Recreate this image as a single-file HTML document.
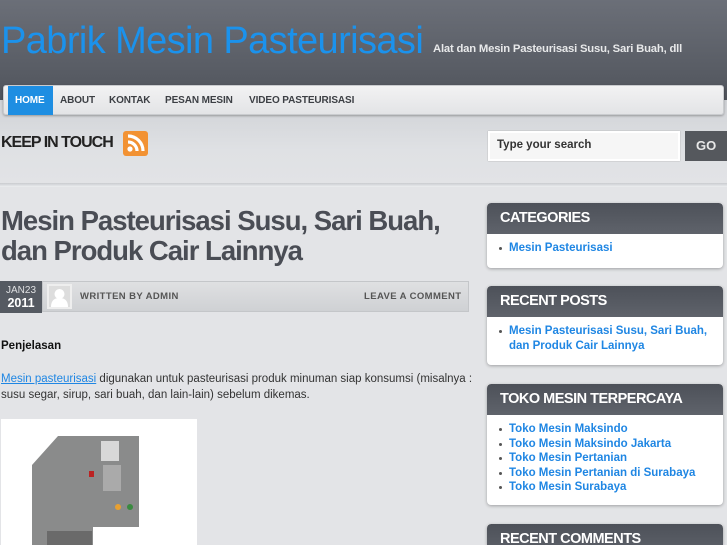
<!DOCTYPE html>
<html><head><meta charset="utf-8"><style>
*{margin:0;padding:0;box-sizing:border-box}
html,body{width:727px;height:545px;overflow:hidden}
body{background:#e3e4e7;font-family:"Liberation Sans",sans-serif;position:relative}
.hdr{position:absolute;left:0;top:0;width:727px;height:100px;background:linear-gradient(#6b6f78,#565a62 80%,#4e525a)}
.title{position:absolute;left:1px;top:20px;font-size:38px;color:#1b92ec;letter-spacing:-0.6px}
.tag{position:absolute;left:433px;top:43px;font-size:11.3px;font-weight:bold;color:#e8e9ea;letter-spacing:-0.2px}
.band{position:absolute;left:0;top:100px;width:727px;height:84px;background:linear-gradient(#d0d2d6,#dfe1e4 60%,#e2e3e6)}
.nav{position:absolute;left:3px;top:85px;width:721px;height:30px;background:linear-gradient(#f2f2f3,#e3e4e6);border:1px solid #c9cbce;border-radius:3px;box-shadow:0 1px 2px rgba(0,0,0,.3)}
.nav span{position:absolute;top:0;height:28px;line-height:29px;font-size:10px;font-weight:bold;color:#3c3f44;letter-spacing:-0.1px}
.sep{position:absolute;left:0;top:183px;width:727px;height:4px;background:linear-gradient(#c9cbcf,#eceef0)}
.side{position:absolute;left:487px;width:236px;background:#fff;border-radius:4px;box-shadow:0 1px 3px rgba(0,0,0,.3);overflow:hidden}
.side h3{background:linear-gradient(#4d5159,#5f636b);color:#fff;font-size:14.5px;height:31px;line-height:31px;padding-left:13px;border-radius:4px 4px 0 0;letter-spacing:-0.5px}
.side ul{list-style:none;padding:7px 0 0 11px}
.side li{font-size:11.5px;font-weight:bold;color:#1f86e3;line-height:14.5px;padding-left:11px;position:relative}
.side li:before{content:"";position:absolute;left:1px;top:6px;width:3px;height:3px;background:#555;border-radius:50%}
</style></head><body>
<div class="hdr"></div>
<div class="title">Pabrik Mesin Pasteurisasi</div>
<div class="tag">Alat dan Mesin Pasteurisasi Susu, Sari Buah, dll</div>
<div class="band"></div>
<div class="nav">
<span style="left:4px;width:45px;background:#1e8ee2;color:#fff;padding-left:7px;height:29px;top:0">HOME</span>
<span style="left:56px">ABOUT</span><span style="left:105px">KONTAK</span><span style="left:161px">PESAN MESIN</span><span style="left:245px">VIDEO PASTEURISASI</span>
</div>
<div style="position:absolute;left:1px;top:134px;font-size:16px;font-weight:bold;color:#222;letter-spacing:-1px">KEEP IN TOUCH</div>
<svg style="position:absolute;left:123px;top:131px" width="25" height="25"><rect width="25" height="25" rx="3" fill="#f29233"/><circle cx="7" cy="18" r="2.6" fill="#fff"/><path d="M5 11a9 9 0 0 1 9 9M5 5a15 15 0 0 1 15 15" stroke="#fff" stroke-width="3.2" fill="none"/></svg>
<div style="position:absolute;left:488px;top:131px;width:192px;height:30px;background:#f6f6f6;border:2px solid #fff;box-shadow:0 0 1px #999;font-size:11.5px;font-weight:bold;color:#333;padding:6px 7px">Type your search</div>
<div style="position:absolute;left:685px;top:131px;width:42px;height:30px;background:#55585d;color:#e8e8e8;font-size:13px;font-weight:bold;line-height:30px;padding-left:11px">GO</div>
<div class="sep"></div>
<div style="position:absolute;left:1px;top:206px;font-size:27.5px;font-weight:bold;color:#4a4d55;line-height:30px;letter-spacing:-1px">Mesin Pasteurisasi Susu, Sari Buah,<br>dan Produk Cair Lainnya</div>
<div style="position:absolute;left:42px;top:281px;width:427px;height:31px;background:linear-gradient(#dfe0e2,#cfd1d4);border:1px solid #c4c6c9"></div>
<div style="position:absolute;left:0;top:281px;width:42px;height:32px;background:#555a62;color:#fff;text-align:center"><div style="font-size:10px;margin-top:4px;color:#dfe0e2">JAN23</div><div style="font-size:12.5px;font-weight:bold">2011</div></div>
<div style="position:absolute;left:47px;top:284px;width:25px;height:25px;background:#ddd;border:2px solid #eee"><svg width="21" height="21"><circle cx="10.5" cy="8" r="5" fill="#fff"/><path d="M2 21c0-7 4-9 8.5-9s8.5 2 8.5 9z" fill="#fff"/></svg></div>
<div style="position:absolute;left:80px;top:291px;font-size:9.5px;font-weight:bold;color:#555;letter-spacing:.4px">WRITTEN BY ADMIN</div>
<div style="position:absolute;left:364px;top:291px;font-size:9.5px;font-weight:bold;color:#555;letter-spacing:.4px">LEAVE A COMMENT</div>
<div style="position:absolute;left:1px;top:340px;font-size:11.5px;font-weight:bold;color:#111">Penjelasan</div>
<div style="position:absolute;left:1px;top:371px;width:478px;font-size:11.5px;color:#333;line-height:16px"><span style="color:#1f86e3;text-decoration:underline">Mesin pasteurisasi</span> digunakan untuk pasteurisasi produk minuman siap konsumsi (misalnya : susu segar, sirup, sari buah, dan lain-lain) sebelum dikemas.</div>
<div style="position:absolute;left:1px;top:419px;width:196px;height:126px;background:#fff;overflow:hidden">
<svg width="196" height="130"><path d="M31 46 L31 130 L92 130 L92 108 L138 108 L138 17 L57 17 Z" fill="#8a8b8b"/><rect x="100" y="22" width="18" height="20" fill="#d8d8d8"/><rect x="102" y="46" width="18" height="26" fill="#aaa"/><rect x="88" y="52" width="5" height="6" fill="#b22"/><circle cx="117" cy="88" r="3" fill="#e8a030"/><circle cx="129" cy="88" r="3" fill="#3a8a40"/><rect x="46" y="112" width="45" height="18" fill="#6a6a6a"/></svg></div>
<div class="side" style="top:203px;height:65px"><h3>CATEGORIES</h3><ul><li>Mesin Pasteurisasi</li></ul></div>
<div class="side" style="top:286px;height:79px"><h3>RECENT POSTS</h3><ul><li>Mesin Pasteurisasi Susu, Sari Buah, dan Produk Cair Lainnya</li></ul></div>
<div class="side" style="top:384px;height:121px"><h3>TOKO MESIN TERPERCAYA</h3><ul><li>Toko Mesin Maksindo</li><li>Toko Mesin Maksindo Jakarta</li><li>Toko Mesin Pertanian</li><li>Toko Mesin Pertanian di Surabaya</li><li>Toko Mesin Surabaya</li></ul></div>
<div class="side" style="top:524px;height:21px;border-radius:4px 4px 0 0"><h3>RECENT COMMENTS</h3></div>
</body></html>
